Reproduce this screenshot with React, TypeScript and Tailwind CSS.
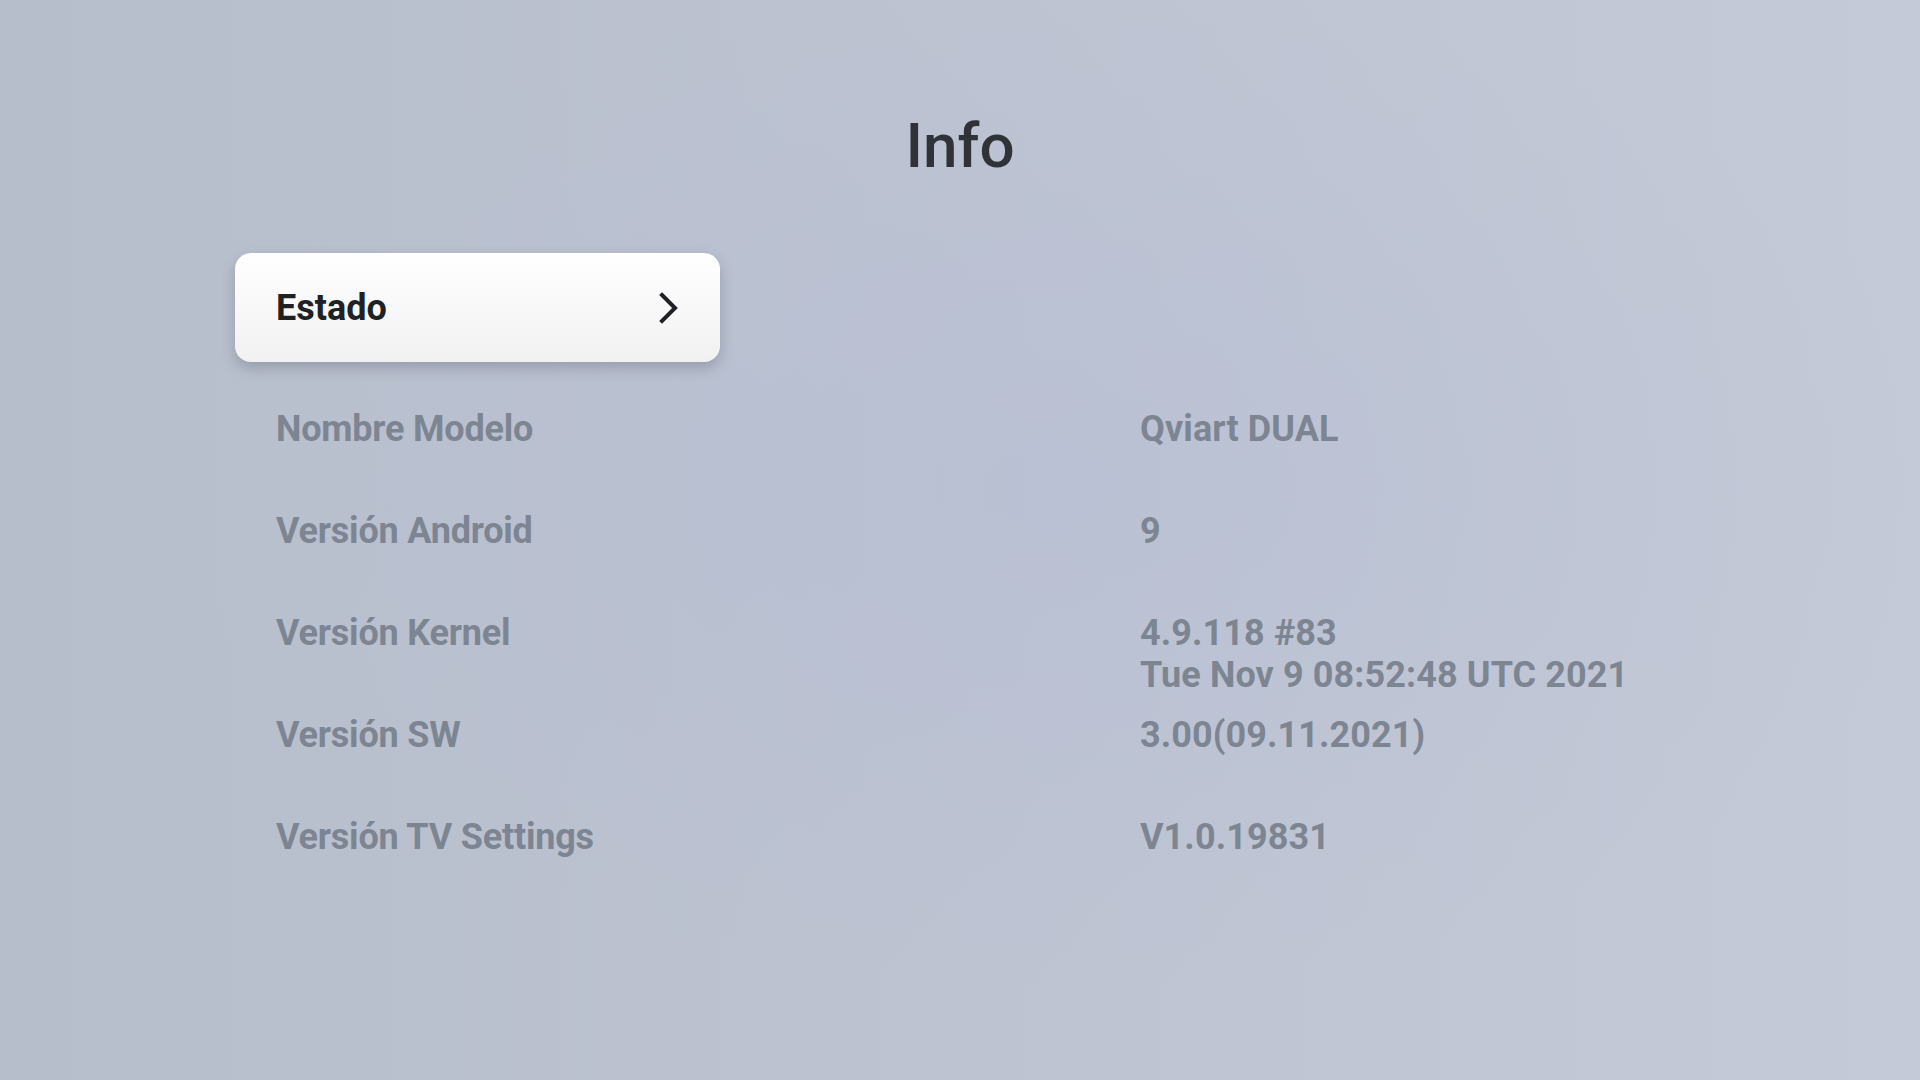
const rows: { label: string; value: string[] }[] = [
  { label: "Nombre Modelo", value: ["Qviart DUAL"] },
  { label: "Versión Android", value: ["9"] },
  { label: "Versión Kernel", value: ["4.9.118 #83", "Tue Nov 9 08:52:48 UTC 2021"] },
  { label: "Versión SW", value: ["3.00(09.11.2021)"] },
  { label: "Versión TV Settings", value: ["V1.0.19831"] },
];

export default function App() {
  return (
    <main
      className="relative h-[1080px] w-[1920px] overflow-hidden bg-gradient-to-r from-[#b7becb] via-[#bdc3d1] to-[#c4cad7]"
      style={{ fontFamily: "Roboto, 'Liberation Sans', sans-serif" }}
    >
      {/* soft bluish glow */}
      <div className="pointer-events-none absolute inset-0 bg-[radial-gradient(ellipse_at_55%_45%,rgba(180,188,214,0.4),transparent_60%)]" />

      <div className="relative flex flex-col">
        {/* Title */}
        <h1 className="mt-[115px] text-center text-[62px] font-medium leading-none text-[#2f3237]">
          Info
        </h1>

        {/* List */}
        <section className="ml-[235px] mt-[76px] flex flex-col">
          {/* Focused item */}
          <div className="flex h-[109px] w-[485px] items-center justify-between rounded-[16px] bg-gradient-to-b from-white to-[#f1f1f2] pl-[41px] pr-[40px] shadow-[0_6px_14px_rgba(60,66,84,0.28)]">
            <span className="text-[36px] font-bold leading-none text-[#202124]">Estado</span>
            <svg width="22" height="32" viewBox="0 0 22 32" fill="none">
              <path d="M4 3 L17 16 L4 29" stroke="#202124" strokeWidth="4" strokeLinecap="square" strokeLinejoin="miter" />
            </svg>
          </div>

          {/* Info rows */}
          <div className="mt-[46px] flex flex-col">
            {rows.map((r) => (
              <div key={r.label} className="flex h-[102px] pl-[41px]">
                <div className="w-[864px] text-[36px] font-bold leading-[42px] tracking-[-0.2px] text-[#7d8592]">{r.label}</div>
                <div className="flex flex-col text-[36px] font-bold leading-[42px] tracking-[0.1px] text-[#7d8592]">
                  {r.value.map((v) => (
                    <span key={v}>{v}</span>
                  ))}
                </div>
              </div>
            ))}
          </div>
        </section>
      </div>
    </main>
  );
}
